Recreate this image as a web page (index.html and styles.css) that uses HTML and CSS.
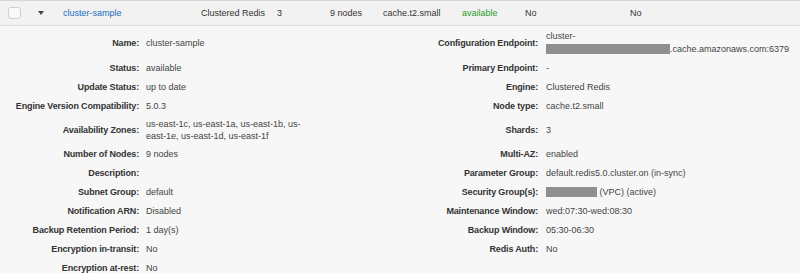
FILE: index.html
```html
<!DOCTYPE html>
<html>
    <head>
        <link rel="stylesheet" href="styles.css">
        <title>ElastiCache cluster</title>
    </head>
    <body>
        <div class="row-head">
            <div class="c-check"><span class="box"></span></div>
            <div class="c-caret"><span class="caret"></span></div>
            <div class="c-name"><a href="#">cluster-sample</a></div>
            <div class="c-engine">Clustered Redis</div>
            <div class="c-shards">3</div>
            <div class="c-nodes">9 nodes</div>
            <div class="c-type">cache.t2.small</div>
            <div class="c-status">available</div>
            <div class="c-az">No</div>
            <div class="c-last">No</div>
        </div>

        <div class="details">
            <div class="lbl">Name:</div>
            <div class="val">cluster-sample</div>
            <div class="lbl">Configuration Endpoint:</div>
            <div class="val endpoint">cluster-<br><span class="redact wide"></span>.cache.amazonaws.com:6379</div>

            <div class="lbl">Status:</div>
            <div class="val">available</div>
            <div class="lbl">Primary Endpoint:</div>
            <div class="val">-</div>

            <div class="lbl">Update Status:</div>
            <div class="val">up to date</div>
            <div class="lbl">Engine:</div>
            <div class="val">Clustered Redis</div>

            <div class="lbl">Engine Version Compatibility:</div>
            <div class="val">5.0.3</div>
            <div class="lbl">Node type:</div>
            <div class="val">cache.t2.small</div>

            <div class="lbl">Availability Zones:</div>
            <div class="val">us-east-1c, us-east-1a, us-east-1b, us-east-1e, us-east-1d, us-east-1f</div>
            <div class="lbl">Shards:</div>
            <div class="val">3</div>

            <div class="lbl">Number of Nodes:</div>
            <div class="val">9 nodes</div>
            <div class="lbl">Multi-AZ:</div>
            <div class="val">enabled</div>

            <div class="lbl">Description:</div>
            <div class="val"></div>
            <div class="lbl">Parameter Group:</div>
            <div class="val">default.redis5.0.cluster.on (in-sync)</div>

            <div class="lbl">Subnet Group:</div>
            <div class="val">default</div>
            <div class="lbl">Security Group(s):</div>
            <div class="val"><span class="redact small"></span> (VPC) (active)</div>

            <div class="lbl">Notification ARN:</div>
            <div class="val">Disabled</div>
            <div class="lbl">Maintenance Window:</div>
            <div class="val">wed:07:30-wed:08:30</div>

            <div class="lbl">Backup Retention Period:</div>
            <div class="val">1 day(s)</div>
            <div class="lbl">Backup Window:</div>
            <div class="val">05:30-06:30</div>

            <div class="lbl">Encryption in-transit:</div>
            <div class="val">No</div>
            <div class="lbl">Redis Auth:</div>
            <div class="val">No</div>

            <div class="lbl">Encryption at-rest:</div>
            <div class="val">No</div>
            <div class="lbl"></div>
            <div class="val"></div>
        </div>
    </body>
</html>
```

FILE: styles.css
```css
body {
    margin: 0;
    background-color: #f7f7f7;
    font-family: "Liberation Sans", Arial, sans-serif;
    font-size: 9px;
    color: #444;
}
.row-head {
    display: flex;
    align-items: center;
    height: 24px;
    background-color: #f2f2f2;
    border-top: 1px solid #d6d6d6;
    border-bottom: 1px solid #dcdcdc;
    color: #333;
}
.row-head > div {
    flex: none;
    white-space: nowrap;
}
.c-check { width: 30px; }
.box {
    display: block;
    margin-left: 8px;
    width: 11px;
    height: 10px;
    border: 1px solid #cfcfcf;
    border-radius: 3px;
    background-color: #f9f9f9;
}
.c-caret { width: 33px; }
.caret {
    display: block;
    margin-left: 8px;
    width: 0;
    height: 0;
    border-left: 3.5px solid transparent;
    border-right: 3.5px solid transparent;
    border-top: 4px solid #444;
}
.c-name { width: 138px; }
.c-name a {
    color: #1a6cbf;
    text-decoration: none;
}
.c-engine { width: 76px; }
.c-shards { width: 53px; }
.c-nodes { width: 53px; }
.c-type { width: 79px; }
.c-status { width: 63px; color: #2a9d2a; }
.c-az { width: 105px; }
.details {
    display: grid;
    grid-template-columns: 146px 165px 235px 1fr;
    grid-auto-rows: minmax(19px, auto);
    padding-top: 1px;
    border-left: 1px solid #e2e2e2;
    margin-left: -1px;
}
.lbl, .val {
    display: flex;
    align-items: center;
    padding: 2.5px 0;
    line-height: 12px;
}
.lbl {
    justify-content: flex-end;
    padding-right: 7px;
    font-weight: bold;
    color: #333;
    text-align: right;
    letter-spacing: -0.15px;
}
.details .lbl:nth-child(4n+3) {
    padding-right: 8px;
}
.val {
    display: block;
    align-self: center;
}
.val.endpoint {
    line-height: 13px;
}
.redact {
    display: inline-block;
    height: 10px;
    vertical-align: -2px;
    background-color: #8f8f8f;
}
.redact.wide { width: 124px; }
.redact.small { width: 51px; }
```
